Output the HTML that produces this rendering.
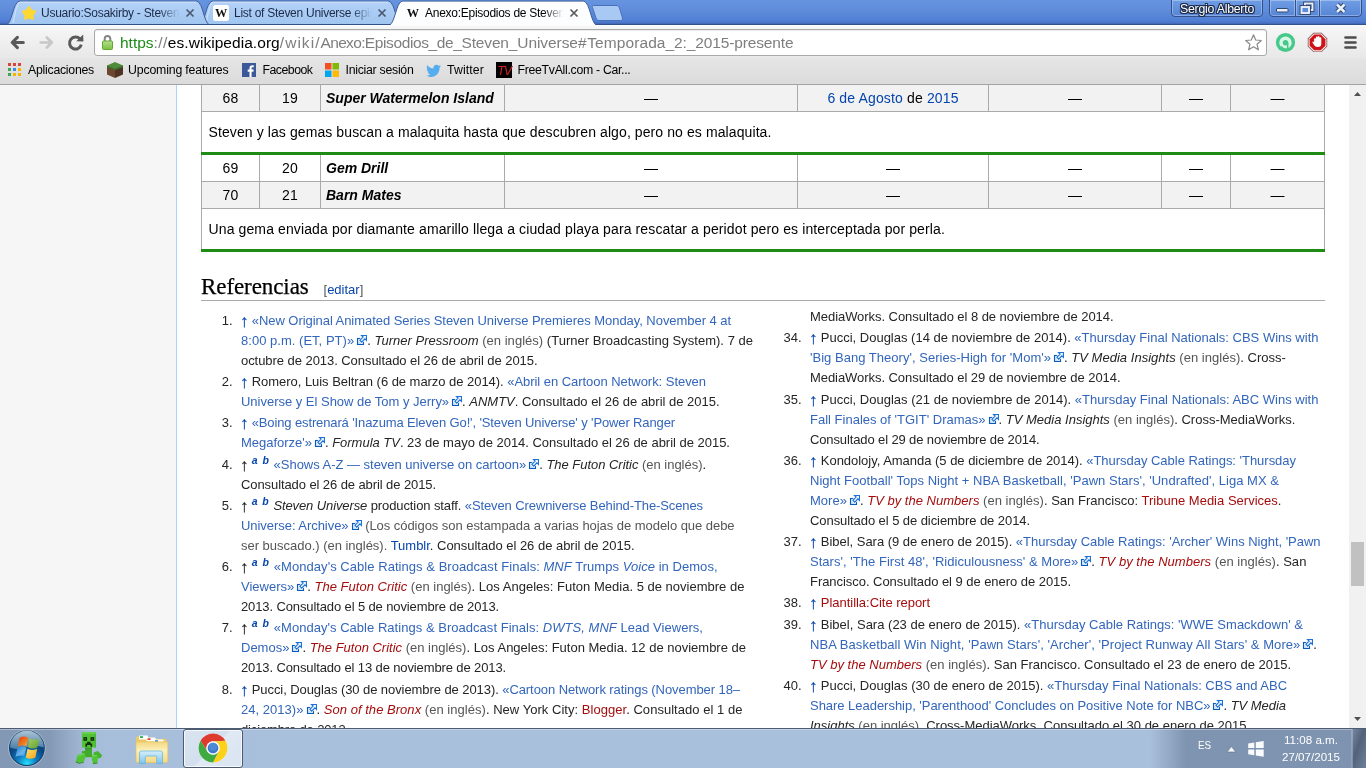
<!DOCTYPE html>
<html lang="es">
<head>
<meta charset="utf-8">
<title>Anexo:Episodios de Steven Universe</title>
<style>
html,body{margin:0;padding:0;}
body{width:1366px;height:768px;overflow:hidden;position:relative;background:#fff;font-family:"Liberation Sans",sans-serif;}
.abs{position:absolute;}
#root{position:absolute;left:0;top:0;width:1366px;height:768px;overflow:hidden;will-change:transform;}
/* ---------- browser chrome ---------- */
#titlebar{position:absolute;left:0;top:0;width:1366px;height:25px;background:linear-gradient(#6694df 0,#5f8ddb 10px,#507ed4 21px,#4873c6 23px,#3d62ad 24px);}
#titleline0{position:absolute;left:0;top:24px;width:1366px;height:1px;background:#33528c;}
#toolbar{position:absolute;left:0;top:25px;width:1366px;height:33px;background:linear-gradient(#fbfdff 0,#f6f6f6 2px,#e8e8e8 33px);}
#bookbar{position:absolute;left:0;top:58px;width:1366px;height:26px;background:linear-gradient(#e5e5e5,#dbdbdb);}
#chromeline{position:absolute;left:0;top:84px;width:1366px;height:1px;background:#a3a3a3;}
.tabtxt{position:absolute;top:4px;height:18px;line-height:18px;font-size:12px;letter-spacing:-.27px;color:#1b2a47;white-space:nowrap;overflow:hidden;}
.tabtxt.act{color:#000;}
.bm{position:absolute;top:61px;height:18px;line-height:18px;font-size:12.3px;color:#000;white-space:nowrap;}
#omni{position:absolute;left:94px;top:29px;width:1171px;height:25px;background:#fff;border:1px solid #a9a9a9;border-radius:3px;box-shadow:inset 0 1px 1px rgba(0,0,0,.08);}
#url{position:absolute;left:120px;top:31px;height:23px;line-height:23px;font-size:15.5px;white-space:nowrap;color:#7e7e7e;}
#url .g{color:#1c8c17;}
#url .k{color:#000;}
/* ---------- page ---------- */
#page{position:absolute;left:0;top:85px;width:1349px;height:643px;background:#f6f6f6;overflow:hidden;}
#content{position:absolute;left:176px;top:-200px;width:1173px;height:1200px;background:#fff;border-left:1px solid #a7d7f9;}
#scroll{position:absolute;left:1349px;top:85px;width:17px;height:643px;background:#f1f1f1;}
#thumb{position:absolute;left:2px;top:457px;width:13px;height:44px;background:#c1c1c1;}

.tbl{position:absolute;left:201px;top:0;width:1124px;height:170px;font-size:14px;color:#000;}
.tbl .row{position:absolute;left:0;width:1124px;}
.tbl .row.g{background:#f2f2f2;}
.tbl .hl{position:absolute;left:0;width:1124px;height:1px;background:#aaa;}
.tbl .gl{position:absolute;left:0;width:1124px;height:3px;background:#1e8c14;}
.tbl .vl{position:absolute;width:1px;background:#aaa;}
.tbl .vl.c{top:0;height:26px;}
.tbl .vl.d{top:70px;height:53px;}
.tbl .td{position:absolute;height:26px;line-height:26px;text-align:center;white-space:nowrap;letter-spacing:.12px;}
.tbl .td.t{text-align:left;letter-spacing:0;}
.tbl .sum{position:absolute;left:7.500px;height:40px;line-height:40px;white-space:nowrap;letter-spacing:.1px;}
a.l{color:#0645ad;}
a.e{color:#3366bb;}
a.n{color:#a50d0d;}
#h2{position:absolute;left:201px;top:187px;height:30px;line-height:30px;font-family:"Liberation Serif",serif;font-size:23px;letter-spacing:-.08px;color:#000;white-space:nowrap;-webkit-text-stroke:.25px #000;}
#edit{position:absolute;left:323.500px;top:195px;height:20px;line-height:20px;font-size:13px;color:#555;white-space:nowrap;}
#h2line{position:absolute;left:201px;top:215px;width:1124px;height:1px;background:#aaa;}
.ln,.num{position:absolute;height:20px;line-height:20px;font-size:13px;color:#252525;white-space:nowrap;}
.num{width:31.500px;text-align:right;}
.ln .g{color:#555;}
.ln sup{font-size:10.5px;line-height:0;vertical-align:baseline;position:relative;top:-5px;margin-right:1.2px;letter-spacing:0;}
.ln .u{display:inline-block;width:7.200px;font-size:17px;line-height:0;text-align:center;position:relative;top:1.500px;left:-1px;letter-spacing:0;-webkit-text-stroke:.25px currentColor;}
svg.x{display:inline-block;vertical-align:baseline;position:relative;top:0;}
/* ---------- taskbar ---------- */
#taskbar{position:absolute;left:0;top:728px;width:1366px;height:40px;background:linear-gradient(90deg,#8398b5 0,#8499b6 50px,#a7bedb 90px,#a9c0dc 300px,#a9c0dc 1150px,#7f94b0 1186px,#7e93af 1366px);}
#taskline{position:absolute;left:0;top:728px;width:1366px;height:1px;background:#4d5c72;}
#taskhi{position:absolute;left:0;top:729px;width:1366px;height:1px;background:rgba(255,255,255,.35);}
.tray{position:absolute;height:16px;line-height:16px;font-size:11.6px;color:#fff;white-space:nowrap;}
</style>
</head>
<body>
<div id="root">
<!-- PAGE -->
<div id="page">
 <div id="content"></div>
 <!-- table -->
 <div class="tbl">
  <div class="row g" style="top:0;height:26px"></div>
  <div class="hl" style="top:26px"></div>
  <div class="hl" style="top:96px"></div>
  <div class="row g" style="top:97px;height:26px"></div>
  <div class="hl" style="top:123px"></div>
  <div class="vl" style="left:0;top:0;height:164px"></div>
  <div class="vl" style="left:1123px;top:0;height:164px"></div>
  <div class="vl c" style="left:58px"></div><div class="vl c" style="left:119px"></div><div class="vl c" style="left:303px"></div><div class="vl c" style="left:596px"></div><div class="vl c" style="left:787px"></div><div class="vl c" style="left:960px"></div><div class="vl c" style="left:1029px"></div>
  <div class="vl d" style="left:58px"></div><div class="vl d" style="left:119px"></div><div class="vl d" style="left:303px"></div><div class="vl d" style="left:596px"></div><div class="vl d" style="left:787px"></div><div class="vl d" style="left:960px"></div><div class="vl d" style="left:1029px"></div>
  <div class="gl" style="top:67px"></div>
  <div class="gl" style="top:164px"></div>
  <!-- row 68 -->
  <div class="td" style="left:1px;width:57px;top:0">68</div>
  <div class="td" style="left:59px;width:60px;top:0">19</div>
  <div class="td t" style="left:125px;top:0"><b><i>Super Watermelon Island</i></b></div>
  <div class="td" style="left:304px;width:292px;top:0">—</div>
  <div class="td" style="left:597px;width:190px;top:0;letter-spacing:.145px"><a class="l">6 de Agosto</a> de <a class="l">2015</a></div>
  <div class="td" style="left:788px;width:172px;top:0">—</div>
  <div class="td" style="left:961px;width:68px;top:0">—</div>
  <div class="td" style="left:1030px;width:93px;top:0">—</div>
  <div class="sum" style="top:27px;letter-spacing:.095px">Steven y las gemas buscan a malaquita hasta que descubren algo, pero no es malaquita.</div>
  <!-- row 69 -->
  <div class="td" style="left:1px;width:57px;top:70px">69</div>
  <div class="td" style="left:59px;width:60px;top:70px">20</div>
  <div class="td t" style="left:125px;top:70px"><b><i>Gem Drill</i></b></div>
  <div class="td" style="left:304px;width:292px;top:70px">—</div>
  <div class="td" style="left:597px;width:190px;top:70px">—</div>
  <div class="td" style="left:788px;width:172px;top:70px">—</div>
  <div class="td" style="left:961px;width:68px;top:70px">—</div>
  <div class="td" style="left:1030px;width:93px;top:70px">—</div>
  <!-- row 70 -->
  <div class="td" style="left:1px;width:57px;top:97px">70</div>
  <div class="td" style="left:59px;width:60px;top:97px">21</div>
  <div class="td t" style="left:125px;top:97px"><b><i>Barn Mates</i></b></div>
  <div class="td" style="left:304px;width:292px;top:97px">—</div>
  <div class="td" style="left:597px;width:190px;top:97px">—</div>
  <div class="td" style="left:788px;width:172px;top:97px">—</div>
  <div class="td" style="left:961px;width:68px;top:97px">—</div>
  <div class="td" style="left:1030px;width:93px;top:97px">—</div>
  <div class="sum" style="top:124px;letter-spacing:.117px">Una gema enviada por diamante amarillo llega a ciudad playa para rescatar a peridot pero es interceptada por perla.</div>
 </div>
 <!-- heading -->
 <div id="h2">Referencias</div>
 <div id="edit">[<a class="l">editar</a>]</div>
 <div id="h2line"></div>
 <!-- references -->
<div class="num" style="left:201px;top:226.0px">1.</div>
<div class="ln" id="l0" style="left:241px;top:226.0px;letter-spacing:-0.051px"><a class="l u">↑</a> <a class="e">«New Original Animated Series Steven Universe Premieres Monday, November 4 at</a></div>
<div class="ln" id="l1" style="left:241px;top:246.0px;letter-spacing:0.023px"><a class="e">8:00 p.m. (ET, PT)»</a><svg class="x" width="13" height="10" viewBox="-3 0 13 10"><rect x=".5" y="3.500" width="6" height="6" fill="#d3e6fa" stroke="#085bb8" stroke-width="1.100"/><path d="M4.500 .500 H9.500 V5.500 L7.900 3.900 L4.700 7.100 L2.900 5.300 L6.100 2.100 Z" fill="#fff" stroke="#fff" stroke-width="2.200"/><path d="M4.500 .500 H9.500 V5.500 L7.900 3.900 L4.700 7.100 L2.900 5.300 L6.100 2.100 Z" fill="#f2f8ff" stroke="#1c72d8" stroke-width="1.150"/></svg>. <i>Turner Pressroom</i> <span class="g">(en inglés)</span> (Turner Broadcasting System). 7 de</div>
<div class="ln" id="l2" style="left:241px;top:266.0px;letter-spacing:-0.054px">octubre de 2013. Consultado el 26 de abril de 2015.</div>
<div class="num" style="left:201px;top:287.0px">2.</div>
<div class="ln" id="l3" style="left:241px;top:287.0px;letter-spacing:-0.042px"><a class="l u">↑</a> Romero, Luis Beltran (6 de marzo de 2014). <a class="e">«Abril en Cartoon Network: Steven</a></div>
<div class="ln" id="l4" style="left:241px;top:307.0px;letter-spacing:-0.014px"><a class="e">Universe y El Show de Tom y Jerry»</a><svg class="x" width="13" height="10" viewBox="-3 0 13 10"><rect x=".5" y="3.500" width="6" height="6" fill="#d3e6fa" stroke="#085bb8" stroke-width="1.100"/><path d="M4.500 .500 H9.500 V5.500 L7.900 3.900 L4.700 7.100 L2.900 5.300 L6.100 2.100 Z" fill="#fff" stroke="#fff" stroke-width="2.200"/><path d="M4.500 .500 H9.500 V5.500 L7.900 3.900 L4.700 7.100 L2.900 5.300 L6.100 2.100 Z" fill="#f2f8ff" stroke="#1c72d8" stroke-width="1.150"/></svg>. <i>ANMTV</i>. Consultado el 26 de abril de 2015.</div>
<div class="num" style="left:201px;top:328.0px">3.</div>
<div class="ln" id="l5" style="left:241px;top:328.0px;letter-spacing:-0.124px"><a class="l u">↑</a> <a class="e">«Boing estrenará 'Inazuma Eleven Go!', 'Steven Universe' y 'Power Ranger</a></div>
<div class="ln" id="l6" style="left:241px;top:348.0px;letter-spacing:-0.017px"><a class="e">Megaforze'»</a><svg class="x" width="13" height="10" viewBox="-3 0 13 10"><rect x=".5" y="3.500" width="6" height="6" fill="#d3e6fa" stroke="#085bb8" stroke-width="1.100"/><path d="M4.500 .500 H9.500 V5.500 L7.900 3.900 L4.700 7.100 L2.900 5.300 L6.100 2.100 Z" fill="#fff" stroke="#fff" stroke-width="2.200"/><path d="M4.500 .500 H9.500 V5.500 L7.900 3.900 L4.700 7.100 L2.900 5.300 L6.100 2.100 Z" fill="#f2f8ff" stroke="#1c72d8" stroke-width="1.150"/></svg>. <i>Formula TV</i>. 23 de mayo de 2014. Consultado el 26 de abril de 2015.</div>
<div class="num" style="left:201px;top:370.0px">4.</div>
<div class="ln" id="l7" style="left:241px;top:370.0px;letter-spacing:-0.026px"><span class="u">↑</span> <sup><i><b><a class="l">a</a></b></i></sup> <sup><i><b><a class="l">b</a></b></i></sup> <a class="e">«Shows A-Z — steven universe on cartoon»</a><svg class="x" width="13" height="10" viewBox="-3 0 13 10"><rect x=".5" y="3.500" width="6" height="6" fill="#d3e6fa" stroke="#085bb8" stroke-width="1.100"/><path d="M4.500 .500 H9.500 V5.500 L7.900 3.900 L4.700 7.100 L2.900 5.300 L6.100 2.100 Z" fill="#fff" stroke="#fff" stroke-width="2.200"/><path d="M4.500 .500 H9.500 V5.500 L7.900 3.900 L4.700 7.100 L2.900 5.300 L6.100 2.100 Z" fill="#f2f8ff" stroke="#1c72d8" stroke-width="1.150"/></svg>. <i>The Futon Critic</i> <span class="g">(en inglés)</span>.</div>
<div class="ln" id="l8" style="left:241px;top:390.0px;letter-spacing:-0.089px">Consultado el 26 de abril de 2015.</div>
<div class="num" style="left:201px;top:411.0px">5.</div>
<div class="ln" id="l9" style="left:241px;top:411.0px;letter-spacing:-0.103px"><span class="u">↑</span> <sup><i><b><a class="l">a</a></b></i></sup> <sup><i><b><a class="l">b</a></b></i></sup> <i>Steven Universe</i> production staff. <a class="e">«Steven Crewniverse Behind-The-Scenes</a></div>
<div class="ln" id="l10" style="left:241px;top:431.0px;letter-spacing:-0.047px"><a class="e">Universe: Archive»</a><svg class="x" width="13" height="10" viewBox="-3 0 13 10"><rect x=".5" y="3.500" width="6" height="6" fill="#d3e6fa" stroke="#085bb8" stroke-width="1.100"/><path d="M4.500 .500 H9.500 V5.500 L7.900 3.900 L4.700 7.100 L2.900 5.300 L6.100 2.100 Z" fill="#fff" stroke="#fff" stroke-width="2.200"/><path d="M4.500 .500 H9.500 V5.500 L7.900 3.900 L4.700 7.100 L2.900 5.300 L6.100 2.100 Z" fill="#f2f8ff" stroke="#1c72d8" stroke-width="1.150"/></svg> <span class="g">(Los códigos son estampada a varias hojas de modelo que debe</span></div>
<div class="ln" id="l11" style="left:241px;top:451.0px;letter-spacing:-0.016px"><span class="g">ser buscado.) (en inglés).</span> <a class="l">Tumblr</a>. Consultado el 26 de abril de 2015.</div>
<div class="num" style="left:201px;top:472.0px">6.</div>
<div class="ln" id="l12" style="left:241px;top:472.0px;letter-spacing:0.045px"><span class="u">↑</span> <sup><i><b><a class="l">a</a></b></i></sup> <sup><i><b><a class="l">b</a></b></i></sup> <a class="e">«Monday's Cable Ratings &amp; Broadcast Finals: <i>MNF</i> Trumps <i>Voice</i> in Demos,</a></div>
<div class="ln" id="l13" style="left:241px;top:492.0px;letter-spacing:0.009px"><a class="e">Viewers»</a><svg class="x" width="13" height="10" viewBox="-3 0 13 10"><rect x=".5" y="3.500" width="6" height="6" fill="#d3e6fa" stroke="#085bb8" stroke-width="1.100"/><path d="M4.500 .500 H9.500 V5.500 L7.900 3.900 L4.700 7.100 L2.900 5.300 L6.100 2.100 Z" fill="#fff" stroke="#fff" stroke-width="2.200"/><path d="M4.500 .500 H9.500 V5.500 L7.900 3.900 L4.700 7.100 L2.900 5.300 L6.100 2.100 Z" fill="#f2f8ff" stroke="#1c72d8" stroke-width="1.150"/></svg>. <a class="n"><i>The Futon Critic</i></a> <span class="g">(en inglés)</span>. Los Angeles: Futon Media. 5 de noviembre de</div>
<div class="ln" id="l14" style="left:241px;top:512.0px;letter-spacing:-0.118px">2013. Consultado el 5 de noviembre de 2013.</div>
<div class="num" style="left:201px;top:533.0px">7.</div>
<div class="ln" id="l15" style="left:241px;top:533.0px;letter-spacing:0.031px"><span class="u">↑</span> <sup><i><b><a class="l">a</a></b></i></sup> <sup><i><b><a class="l">b</a></b></i></sup> <a class="e">«Monday's Cable Ratings &amp; Broadcast Finals: <i>DWTS, MNF</i> Lead Viewers,</a></div>
<div class="ln" id="l16" style="left:241px;top:553.0px;letter-spacing:-0.002px"><a class="e">Demos»</a><svg class="x" width="13" height="10" viewBox="-3 0 13 10"><rect x=".5" y="3.500" width="6" height="6" fill="#d3e6fa" stroke="#085bb8" stroke-width="1.100"/><path d="M4.500 .500 H9.500 V5.500 L7.900 3.900 L4.700 7.100 L2.900 5.300 L6.100 2.100 Z" fill="#fff" stroke="#fff" stroke-width="2.200"/><path d="M4.500 .500 H9.500 V5.500 L7.900 3.900 L4.700 7.100 L2.900 5.300 L6.100 2.100 Z" fill="#f2f8ff" stroke="#1c72d8" stroke-width="1.150"/></svg>. <a class="n"><i>The Futon Critic</i></a> <span class="g">(en inglés)</span>. Los Angeles: Futon Media. 12 de noviembre de</div>
<div class="ln" id="l17" style="left:241px;top:573.0px;letter-spacing:-0.121px">2013. Consultado el 13 de noviembre de 2013.</div>
<div class="num" style="left:201px;top:595.0px">8.</div>
<div class="ln" id="l18" style="left:241px;top:595.0px;letter-spacing:-0.075px"><a class="l u">↑</a> Pucci, Douglas (30 de noviembre de 2013). <a class="e">«Cartoon Network ratings (November 18–</a></div>
<div class="ln" id="l19" style="left:241px;top:615.0px;letter-spacing:0.033px"><a class="e">24, 2013)»</a><svg class="x" width="13" height="10" viewBox="-3 0 13 10"><rect x=".5" y="3.500" width="6" height="6" fill="#d3e6fa" stroke="#085bb8" stroke-width="1.100"/><path d="M4.500 .500 H9.500 V5.500 L7.900 3.900 L4.700 7.100 L2.900 5.300 L6.100 2.100 Z" fill="#fff" stroke="#fff" stroke-width="2.200"/><path d="M4.500 .500 H9.500 V5.500 L7.900 3.900 L4.700 7.100 L2.900 5.300 L6.100 2.100 Z" fill="#f2f8ff" stroke="#1c72d8" stroke-width="1.150"/></svg>. <a class="n"><i>Son of the Bronx</i></a> <span class="g">(en inglés)</span>. New York City: <a class="n">Blogger</a>. Consultado el 1 de</div>
<div class="ln" id="l20" style="left:241px;top:635.0px;letter-spacing:-0.143px">diciembre de 2013.</div>
<div class="ln" id="l21" style="left:810px;top:222.0px;letter-spacing:-0.054px">MediaWorks. Consultado el 8 de noviembre de 2014.</div>
<div class="num" style="left:770px;top:243.0px">34.</div>
<div class="ln" id="l22" style="left:810px;top:243.0px;letter-spacing:-0.002px"><a class="l u">↑</a> Pucci, Douglas (14 de noviembre de 2014). <a class="e">«Thursday Final Nationals: CBS Wins with</a></div>
<div class="ln" id="l23" style="left:810px;top:263.0px;letter-spacing:0.021px"><a class="e">'Big Bang Theory', Series-High for 'Mom'»</a><svg class="x" width="13" height="10" viewBox="-3 0 13 10"><rect x=".5" y="3.500" width="6" height="6" fill="#d3e6fa" stroke="#085bb8" stroke-width="1.100"/><path d="M4.500 .500 H9.500 V5.500 L7.900 3.900 L4.700 7.100 L2.900 5.300 L6.100 2.100 Z" fill="#fff" stroke="#fff" stroke-width="2.200"/><path d="M4.500 .500 H9.500 V5.500 L7.900 3.900 L4.700 7.100 L2.900 5.300 L6.100 2.100 Z" fill="#f2f8ff" stroke="#1c72d8" stroke-width="1.150"/></svg>. <i>TV Media Insights</i> <span class="g">(en inglés)</span>. Cross-</div>
<div class="ln" id="l24" style="left:810px;top:283.0px;letter-spacing:-0.058px">MediaWorks. Consultado el 29 de noviembre de 2014.</div>
<div class="num" style="left:770px;top:305.0px">35.</div>
<div class="ln" id="l25" style="left:810px;top:305.0px;letter-spacing:0.006px"><a class="l u">↑</a> Pucci, Douglas (21 de noviembre de 2014). <a class="e">«Thursday Final Nationals: ABC Wins with</a></div>
<div class="ln" id="l26" style="left:810px;top:325.0px;letter-spacing:0.003px"><a class="e">Fall Finales of 'TGIT' Dramas»</a><svg class="x" width="13" height="10" viewBox="-3 0 13 10"><rect x=".5" y="3.500" width="6" height="6" fill="#d3e6fa" stroke="#085bb8" stroke-width="1.100"/><path d="M4.500 .500 H9.500 V5.500 L7.900 3.900 L4.700 7.100 L2.900 5.300 L6.100 2.100 Z" fill="#fff" stroke="#fff" stroke-width="2.200"/><path d="M4.500 .500 H9.500 V5.500 L7.900 3.900 L4.700 7.100 L2.900 5.300 L6.100 2.100 Z" fill="#f2f8ff" stroke="#1c72d8" stroke-width="1.150"/></svg>. <i>TV Media Insights</i> <span class="g">(en inglés)</span>. Cross-MediaWorks.</div>
<div class="ln" id="l27" style="left:810px;top:345.0px;letter-spacing:-0.123px">Consultado el 29 de noviembre de 2014.</div>
<div class="num" style="left:770px;top:366.0px">36.</div>
<div class="ln" id="l28" style="left:810px;top:366.0px;letter-spacing:-0.023px"><a class="l u">↑</a> Kondolojy, Amanda (5 de diciembre de 2014). <a class="e">«Thursday Cable Ratings: 'Thursday</a></div>
<div class="ln" id="l29" style="left:810px;top:386.0px;letter-spacing:0.024px"><a class="e">Night Football' Tops Night + NBA Basketball, 'Pawn Stars', 'Undrafted', Liga MX &amp;</a></div>
<div class="ln" id="l30" style="left:810px;top:406.0px;letter-spacing:0.014px"><a class="e">More»</a><svg class="x" width="13" height="10" viewBox="-3 0 13 10"><rect x=".5" y="3.500" width="6" height="6" fill="#d3e6fa" stroke="#085bb8" stroke-width="1.100"/><path d="M4.500 .500 H9.500 V5.500 L7.900 3.900 L4.700 7.100 L2.900 5.300 L6.100 2.100 Z" fill="#fff" stroke="#fff" stroke-width="2.200"/><path d="M4.500 .500 H9.500 V5.500 L7.900 3.900 L4.700 7.100 L2.900 5.300 L6.100 2.100 Z" fill="#f2f8ff" stroke="#1c72d8" stroke-width="1.150"/></svg>. <a class="n"><i>TV by the Numbers</i></a> <span class="g">(en inglés)</span>. San Francisco: <a class="n">Tribune Media Services</a>.</div>
<div class="ln" id="l31" style="left:810px;top:426.0px;letter-spacing:-0.070px">Consultado el 5 de diciembre de 2014.</div>
<div class="num" style="left:770px;top:447.0px">37.</div>
<div class="ln" id="l32" style="left:810px;top:447.0px;letter-spacing:-0.023px"><a class="l u">↑</a> Bibel, Sara (9 de enero de 2015). <a class="e">«Thursday Cable Ratings: 'Archer' Wins Night, 'Pawn</a></div>
<div class="ln" id="l33" style="left:810px;top:467.0px;letter-spacing:0.033px"><a class="e">Stars', 'The First 48', 'Ridiculousness' &amp; More»</a><svg class="x" width="13" height="10" viewBox="-3 0 13 10"><rect x=".5" y="3.500" width="6" height="6" fill="#d3e6fa" stroke="#085bb8" stroke-width="1.100"/><path d="M4.500 .500 H9.500 V5.500 L7.900 3.900 L4.700 7.100 L2.900 5.300 L6.100 2.100 Z" fill="#fff" stroke="#fff" stroke-width="2.200"/><path d="M4.500 .500 H9.500 V5.500 L7.900 3.900 L4.700 7.100 L2.900 5.300 L6.100 2.100 Z" fill="#f2f8ff" stroke="#1c72d8" stroke-width="1.150"/></svg>. <a class="n"><i>TV by the Numbers</i></a> <span class="g">(en inglés)</span>. San</div>
<div class="ln" id="l34" style="left:810px;top:487.0px;letter-spacing:-0.047px">Francisco. Consultado el 9 de enero de 2015.</div>
<div class="num" style="left:770px;top:508.0px">38.</div>
<div class="ln" id="l35" style="left:810px;top:508.0px;letter-spacing:-0.029px"><a class="l u">↑</a> <a class="n">Plantilla:Cite report</a></div>
<div class="num" style="left:770px;top:530.0px">39.</div>
<div class="ln" id="l36" style="left:810px;top:530.0px;letter-spacing:0.004px"><a class="l u">↑</a> Bibel, Sara (23 de enero de 2015). <a class="e">«Thursday Cable Ratings: 'WWE Smackdown' &amp;</a></div>
<div class="ln" id="l37" style="left:810px;top:550.0px;letter-spacing:0.052px"><a class="e">NBA Basketball Win Night, 'Pawn Stars', 'Archer', 'Project Runway All Stars' &amp; More»</a><svg class="x" width="13" height="10" viewBox="-3 0 13 10"><rect x=".5" y="3.500" width="6" height="6" fill="#d3e6fa" stroke="#085bb8" stroke-width="1.100"/><path d="M4.500 .500 H9.500 V5.500 L7.900 3.900 L4.700 7.100 L2.900 5.300 L6.100 2.100 Z" fill="#fff" stroke="#fff" stroke-width="2.200"/><path d="M4.500 .500 H9.500 V5.500 L7.900 3.900 L4.700 7.100 L2.900 5.300 L6.100 2.100 Z" fill="#f2f8ff" stroke="#1c72d8" stroke-width="1.150"/></svg>.</div>
<div class="ln" id="l38" style="left:810px;top:570.0px;letter-spacing:0.006px"><a class="n"><i>TV by the Numbers</i></a> <span class="g">(en inglés)</span>. San Francisco. Consultado el 23 de enero de 2015.</div>
<div class="num" style="left:770px;top:591.0px">40.</div>
<div class="ln" id="l39" style="left:810px;top:591.0px;letter-spacing:0.002px"><a class="l u">↑</a> Pucci, Douglas (30 de enero de 2015). <a class="e">«Thursday Final Nationals: CBS and ABC</a></div>
<div class="ln" id="l40" style="left:810px;top:611.0px;letter-spacing:-0.030px"><a class="e">Share Leadership, 'Parenthood' Concludes on Positive Note for NBC»</a><svg class="x" width="13" height="10" viewBox="-3 0 13 10"><rect x=".5" y="3.500" width="6" height="6" fill="#d3e6fa" stroke="#085bb8" stroke-width="1.100"/><path d="M4.500 .500 H9.500 V5.500 L7.900 3.900 L4.700 7.100 L2.900 5.300 L6.100 2.100 Z" fill="#fff" stroke="#fff" stroke-width="2.200"/><path d="M4.500 .500 H9.500 V5.500 L7.900 3.900 L4.700 7.100 L2.900 5.300 L6.100 2.100 Z" fill="#f2f8ff" stroke="#1c72d8" stroke-width="1.150"/></svg>. <i>TV Media</i></div>
<div class="ln" id="l41" style="left:810px;top:631.0px;letter-spacing:-0.007px"><i>Insights</i> <span class="g">(en inglés)</span>. Cross-MediaWorks. Consultado el 30 de enero de 2015.</div>
</div>
<div id="scroll"><div id="thumb"></div><svg class="abs" style="left:0;top:0" width="17" height="643" viewBox="0 0 17 643"><path d="M5 11 L8.500 7 L12 11 Z M5 632 L8.500 636 L12 632 Z" fill="#505050"/></svg></div>

<!-- CHROME -->
<div id="titlebar"></div>
<div id="titleline0"></div>
<svg class="abs" style="left:0;top:0" width="700" height="25" viewBox="0 0 700 25">
 <defs>
  <linearGradient id="gi" x1="0" y1="0" x2="0" y2="1"><stop offset="0" stop-color="#b5d2f9"/><stop offset="1" stop-color="#9fc5ef"/></linearGradient>
  <linearGradient id="ga" x1="0" y1="0" x2="0" y2="1"><stop offset="0" stop-color="#ffffff"/><stop offset="1" stop-color="#fbfdff"/></linearGradient>
 </defs>
 <!-- tab 2 (behind) -->
 <path d="M199.5 25 C205.0 23 206.0 3 212.0 1.1 L389.0 1.1 C395.0 3 396.0 23 401.5 25 Z" fill="url(#gi)"/>
 <path d="M199.5 25 C205.0 23 206.0 3 212.0 1.1 L389.0 1.1 C395.0 3 396.0 23 401.5 25" fill="none" stroke="#3d5e9b" stroke-width="1"/>
 <path d="M206.0 23 C207.5 18 209.0 4 213.0 2.1 L388.0 2.1" fill="none" stroke="#d9e8fc" stroke-width="1" opacity=".85"/>
 <!-- tab 1 -->
 <path d="M6.5 25 C12.0 23 13.0 3 19.0 1.1 L197.0 1.1 C203.0 3 204.0 23 209.5 25 Z" fill="url(#gi)"/>
 <path d="M6.5 25 C12.0 23 13.0 3 19.0 1.1 L197.0 1.1 C203.0 3 204.0 23 209.5 25" fill="none" stroke="#3d5e9b" stroke-width="1"/>
 <path d="M13.0 23 C14.5 18 16.0 4 20.0 2.1 L196.0 2.1" fill="none" stroke="#d9e8fc" stroke-width="1" opacity=".85"/>
 <!-- new tab button -->
 <path d="M593.500 5.500 L616 5.500 C618 5.500 619 6.500 619.500 8 L622.500 18 C623 19.500 622 20.500 620.500 20.500 L599 20.500 C597.500 20.500 596.500 19.500 596 18 L592.500 7.500 C592 6.200 592.500 5.500 593.500 5.500 Z" fill="#a9c9f5" stroke="#4a70b8" stroke-width="1"/>
 <!-- title bottom line -->
 <rect x="0" y="24" width="700" height="1" fill="#33528c"/>
 <!-- active tab -->
 <path d="M389.5 25.5 C395.0 23 396.0 3 402.0 1.1 L584.0 1.1 C590.0 3 591.0 23 596.5 25.5 Z" fill="url(#ga)"/>
 <path d="M389.5 25 C395.0 23 396.0 3 402.0 1.1 L584.0 1.1 C590.0 3 591.0 23 596.5 25" fill="none" stroke="#3d5e9b" stroke-width="1"/>
 <!-- close x -->
 <g stroke="#4a5870" stroke-width="1.700" stroke-linecap="butt">
  <path d="M186.500 9.500 l7 7 m0 -7 l-7 7"/>
  <path d="M378.500 9.500 l7 7 m0 -7 l-7 7"/>
 </g>
 <path d="M570.500 9.500 l7 7 m0 -7 l-7 7" stroke="#5a5a5a" stroke-width="1.700"/>
 <!-- favicon star -->
 <path d="M29.00 7.00 L31.17 10.61 L35.28 11.56 L32.52 14.74 L32.88 18.94 L29.00 17.30 L25.12 18.94 L25.48 14.74 L22.72 11.56 L26.83 10.61 Z" fill="#fdd835" stroke="#fdd835" stroke-width="2" stroke-linejoin="round"/>
 <!-- favicon W tab2 -->
 <rect x="213" y="5" width="16" height="16" rx="2.500" fill="#fff"/>
 <text x="221.200" y="17.300" text-anchor="middle" font-family="Liberation Serif,serif" font-weight="bold" font-size="12.3" fill="#111">W</text>
 <!-- favicon W tab3 -->
 <text x="413" y="17.300" text-anchor="middle" font-family="Liberation Serif,serif" font-weight="bold" font-size="12.3" fill="#111">W</text>
</svg>
<div class="tabtxt" style="left:41px;width:139px;-webkit-mask-image:linear-gradient(90deg,#000 118px,transparent 139px);">Usuario:Sosakirby - Steven Universe</div>
<div class="tabtxt" style="left:234px;width:138px;-webkit-mask-image:linear-gradient(90deg,#000 117px,transparent 138px);">List of Steven Universe episodes</div>
<div class="tabtxt act" style="left:425px;width:139px;-webkit-mask-image:linear-gradient(90deg,#000 118px,transparent 139px);">Anexo:Episodios de Steven Universe</div>

<div id="toolbar"></div>
<div id="bookbar"></div>
<div id="chromeline"></div>
<div id="omni"></div>
<div id="url"><span class="g">https</span><span style="letter-spacing:.43px">://</span><span class="k" style="letter-spacing:.05px">es.wikipedia.org</span><span style="letter-spacing:1.049px">/wiki/</span><span style="letter-spacing:-0.669px">Anexo:</span><span style="letter-spacing:-0.381px">Episodios_de_</span><span style="letter-spacing:-0.163px">Steven_</span><span style="letter-spacing:-0.065px">Universe</span><span style="letter-spacing:0.725px">#</span><span style="letter-spacing:0.078px">Temporada</span><span style="letter-spacing:-0.126px">_2:_2015-presente</span></div>
<!-- toolbar icons -->
<svg class="abs" style="left:0;top:25px" width="130" height="33" viewBox="0 25 130 33">
 <defs><linearGradient id="lk" x1="0" y1="0" x2="0" y2="1"><stop offset="0" stop-color="#b5e08c"/><stop offset="1" stop-color="#79c03f"/></linearGradient></defs>
 <g fill="none" stroke="#595959" stroke-width="3.100" stroke-linecap="round" stroke-linejoin="round">
  <path d="M23.300 42.500 H12.300 M17.400 37.300 L12.200 42.500 L17.400 47.700"/>
 </g>
 <g fill="none" stroke="#c8c8c8" stroke-width="2.700" stroke-linecap="round" stroke-linejoin="round">
  <path d="M40.700 42.500 H51.700 M46.800 37.500 L51.800 42.500 L46.800 47.500"/>
 </g>
 <path d="M80 39 A6 6 0 1 0 81.300 44.700" fill="none" stroke="#595959" stroke-width="3"/>
 <path d="M76.300 41.200 L83.400 41.400 L83.200 34.400 Z" fill="#595959"/>
 <!-- lock -->
 <path d="M104.700 41.500 V38.700 A2.800 2.800 0 0 1 110.300 38.700 V41.500" fill="none" stroke="#858585" stroke-width="2"/>
 <rect x="102.500" y="41" width="10" height="8.500" rx="1" fill="url(#lk)" stroke="#62a835" stroke-width="1"/>
</svg>
<svg class="abs" style="left:1240px;top:25px" width="126" height="33" viewBox="1240 25 126 33">
 <path d="M1253.500 34.800 L1255.700 40 L1261.300 40.500 L1257 44.200 L1258.400 49.800 L1253.500 46.800 L1248.600 49.800 L1250 44.200 L1245.700 40.500 L1251.300 40 Z" fill="#fff" stroke="#8a8a8a" stroke-width="1.200" stroke-linejoin="round"/>
 <circle cx="1285.500" cy="42.500" r="9.600" fill="#45c98b"/>
 <circle cx="1285.500" cy="42.700" r="4.500" fill="none" stroke="#d9f7e9" stroke-width="3.500"/>
 <path d="M1287.700 42.700 V49.500" stroke="#45c98b" stroke-width="1.500"/>
 <path d="M1281 46.500 Q1283.500 49.500 1287 49.300" fill="none" stroke="#45c98b" stroke-width="1.400"/>
 <path d="M1313.48 32.70 L1321.52 32.70 L1327.20 38.38 L1327.20 46.42 L1321.52 52.10 L1313.48 52.10 L1307.80 46.42 L1307.80 38.38 Z" fill="#7d3b3b"/>
 <path d="M1313.77 33.40 L1321.23 33.40 L1326.50 38.67 L1326.50 46.13 L1321.23 51.40 L1313.77 51.40 L1308.50 46.13 L1308.50 38.67 Z" fill="#fbefef"/>
 <path d="M1314.23 34.50 L1320.77 34.50 L1325.40 39.13 L1325.40 45.67 L1320.77 50.30 L1314.23 50.30 L1309.60 45.67 L1309.60 39.13 Z" fill="#cf1217"/>
 <path d="M1314.100 43.800 v-4.600 a.9 .9 0 0 1 1.800 0 v-1.700 a.9 .9 0 0 1 1.800 0 v-.6 a.9 .9 0 0 1 1.800 0 v1.200 a.9 .9 0 0 1 1.800 0 v5.700 q0 3.300 -3.300 3.300 h-.8 q-1.900 0 -3 -1.800 l-2 -3.200 q.9 -1.100 1.900 .3 Z" fill="#fff"/>
 <g stroke="#4d4d4d" stroke-width="2.600" stroke-linecap="round"><path d="M1345.500 37.500 h10 M1345.500 42.500 h10 M1345.500 47.500 h10"/></g>
</svg>
<!-- bookmarks -->
<svg class="abs" style="left:0;top:58px" width="520" height="26" viewBox="0 58 520 26">
 <g>
  <rect x="8" y="63" width="3" height="3" fill="#db4437"/><rect x="13" y="63" width="3" height="3" fill="#db4437"/><rect x="18" y="63" width="3" height="3" fill="#db4437"/>
  <rect x="8" y="68" width="3" height="3" fill="#3aa757"/><rect x="13" y="68" width="3" height="3" fill="#4285f4"/><rect x="18" y="68" width="3" height="3" fill="#f4b400"/>
  <rect x="8" y="73" width="3" height="3" fill="#3aa757"/><rect x="13" y="73" width="3" height="3" fill="#f4b400"/><rect x="18" y="73" width="3" height="3" fill="#f4b400"/>
 </g>
 <!-- minecraft block -->
 <path d="M107 65.500 L115 62 L123 65.500 L115 68.500 Z" fill="#4d8c38"/>
 <path d="M107 65.500 L115 68.500 V78 L107 74.500 Z" fill="#6b4730"/>
 <path d="M123 65.500 L115 68.500 V78 L123 74.500 Z" fill="#4e3322"/>
 <path d="M107 65.500 L115 68.500 L123 65.500 V67.300 L115 70.300 L107 67.300 Z" fill="#3b732b"/>
 <!-- facebook -->
 <rect x="242" y="63" width="14" height="14" fill="#3b5998"/>
 <path d="M251.600 77 v-5.300 h1.800 l.3 -2.100 h-2.100 v-1.300 c0 -.6 .2 -1 1.100 -1 h1.100 v-1.900 c-.2 0 -.9 -.1 -1.600 -.1 c-1.600 0 -2.700 1 -2.700 2.800 v1.500 h-1.800 v2.100 h1.800 v5.300 Z" fill="#fff"/>
 <!-- microsoft -->
 <rect x="325" y="63" width="6.500" height="6.500" fill="#f25022"/><rect x="332.500" y="63" width="6.500" height="6.500" fill="#7fba00"/>
 <rect x="325" y="70.500" width="6.500" height="6.500" fill="#00a4ef"/><rect x="332.500" y="70.500" width="6.500" height="6.500" fill="#ffb900"/>
 <!-- twitter -->
 <path d="M441 66.200 c-.55 .25 -1.150 .4 -1.750 .5 c.65 -.4 1.100 -1 1.350 -1.700 c-.6 .35 -1.250 .6 -1.950 .75 c-.55 -.6 -1.350 -.95 -2.250 -.95 c-1.700 0 -3.050 1.400 -3.050 3.100 c0 .25 0 .5 .1 .7 c-2.550 -.15 -4.800 -1.350 -6.300 -3.250 c-.25 .45 -.4 1 -.4 1.550 c0 1.050 .55 2 1.350 2.550 c-.5 0 -1 -.15 -1.400 -.4 c0 1.500 1.050 2.750 2.450 3.050 c-.45 .1 -.9 .15 -1.400 .05 c.4 1.200 1.550 2.100 2.900 2.150 c-1.300 1 -2.900 1.500 -4.550 1.300 c1.350 .85 2.950 1.350 4.700 1.350 c5.650 0 8.750 -4.700 8.750 -8.750 v-.4 c.6 -.45 1.100 -1 1.500 -1.600 Z" fill="#55acee"/>
 <!-- TV -->
 <rect x="496" y="62" width="16" height="16" fill="#000"/>
 <text x="504" y="75" text-anchor="middle" font-family="Liberation Sans,sans-serif" font-style="italic" font-size="12.500" fill="#d42222" letter-spacing="-1.200">TV</text>
</svg>
<div class="bm" style="left:28px;letter-spacing:-.254px">Aplicaciones</div>
<div class="bm" style="left:128px;letter-spacing:-.16px">Upcoming features</div>
<div class="bm" style="left:262.500px;letter-spacing:-.5px">Facebook</div>
<div class="bm" style="left:345.500px;letter-spacing:-.269px">Iniciar sesión</div>
<div class="bm" style="left:447px;letter-spacing:.11px">Twitter</div>
<div class="bm" style="left:517.500px;letter-spacing:-.3px">FreeTvAll.com - Car...</div>
<!-- window controls -->
<div class="abs" style="left:1171px;top:-1px;width:90px;height:16px;border:1px solid #33508a;border-radius:0 0 4px 4px;background:linear-gradient(#709de4,#5685d6);box-shadow:inset 0 0 0 1px rgba(255,255,255,.3);"></div>
<div class="abs" style="left:1171px;top:1px;width:92px;height:16px;line-height:16px;text-align:center;font-size:12.3px;letter-spacing:-.23px;color:#fff;text-shadow:1px 0 0 #1c2b4a,-1px 0 0 #1c2b4a,0 1px 0 #1c2b4a,0 -1px 0 #1c2b4a,1px 1px 0 #1c2b4a,-1px -1px 0 #1c2b4a,1px -1px 0 #1c2b4a,-1px 1px 0 #1c2b4a;">Sergio Alberto</div>
<div class="abs" style="left:1269px;top:-1px;width:91px;height:16px;border:1px solid #33508a;border-radius:0 0 4px 4px;background:linear-gradient(#709de4,#5685d6);box-shadow:inset 0 0 0 1px rgba(255,255,255,.3);"></div>
<svg class="abs" style="left:1269px;top:0" width="93" height="17" viewBox="1269 0 93 17">
 <path d="M1295.500 0 V16 M1319.500 0 V16" stroke="#33508a" stroke-width="1"/>
 <path d="M1294.500 0 V15 M1296.500 0 V15 M1318.500 0 V15 M1320.500 0 V15" stroke="#fff" stroke-opacity=".3" stroke-width="1"/>
 <rect x="1276.500" y="8.500" width="11.500" height="3.500" rx=".5" fill="#eaf0fb" stroke="#34486f" stroke-width="1"/>
 <rect x="1305" y="3.500" width="7.500" height="6.500" fill="none" stroke="#34486f" stroke-width="3.800"/>
 <rect x="1305" y="3.500" width="7.500" height="6.500" fill="none" stroke="#eaf0fb" stroke-width="1.900"/>
 <rect x="1301.500" y="7" width="7.500" height="6" fill="#5f8cda" stroke="#34486f" stroke-width="3.800"/>
 <rect x="1301.500" y="7" width="7.500" height="6" fill="#5f8cda" stroke="#eaf0fb" stroke-width="1.900"/>
 <path d="M1337 4.500 l7.500 7.500 M1344.500 4.500 l-7.500 7.500" stroke="#34486f" stroke-width="4.600" />
 <path d="M1337 4.500 l7.500 7.500 M1344.500 4.500 l-7.500 7.500" stroke="#eaf0fb" stroke-width="2.500" />
</svg>

<!-- TASKBAR -->
<div id="taskbar"></div>
<div id="taskline"></div>
<div id="taskhi"></div>
<div class="abs" style="left:183px;top:729px;width:58px;height:37px;border:1px solid #4d5b70;border-radius:3px;background:linear-gradient(135deg,#dbe5f1 0,#d3dfee 48%,#e0e9f4 50%,#d9e4f1 100%);box-shadow:inset 0 0 0 1px rgba(255,255,255,.75);"></div>
<svg class="abs" style="left:0;top:728px" width="260" height="40" viewBox="0 728 260 40">
 <defs>
  <radialGradient id="orb" cx=".5" cy=".95" r=".9"><stop offset="0" stop-color="#22e0fb"/><stop offset=".3" stop-color="#0f7fc4"/><stop offset=".62" stop-color="#0a4a86"/><stop offset="1" stop-color="#0b3a6e"/></radialGradient>
  <linearGradient id="orbt" x1="0" y1="0" x2="0" y2="1"><stop offset="0" stop-color="#b5cbdb"/><stop offset="1" stop-color="#4e81a6"/></linearGradient>
  <linearGradient id="fold" x1="0" y1="0" x2="0" y2="1"><stop offset="0" stop-color="#f3d77e"/><stop offset=".4" stop-color="#fbefba"/><stop offset="1" stop-color="#f4d983"/></linearGradient>
  <linearGradient id="stand" x1="0" y1="0" x2="0" y2="1"><stop offset="0" stop-color="#d6f0fb"/><stop offset="1" stop-color="#7cc4ec"/></linearGradient>
 </defs>
 <!-- start orb -->
 <circle cx="26.900" cy="748.100" r="18.700" fill="#b3c6da" opacity=".85"/>
 <circle cx="26.900" cy="748.100" r="17.900" fill="#123964"/>
 <circle cx="26.900" cy="748.100" r="17" fill="url(#orb)"/>
 <path d="M10 747.500 A16.900 16.900 0 0 1 43.800 747.500 Q35.500 744 26.900 747.300 Q18.300 750.600 10 747.500 Z" fill="url(#orbt)" opacity=".95"/>
 <!-- flag -->
 <path d="M19.300 738 Q23.800 735.300 28.300 737.800 L26.500 746.300 Q22.300 744.200 17.900 746.600 Z" fill="url(#fr)"/>
 <path d="M29.600 738.600 Q33.800 741 39.200 738.600 L37.500 747.300 Q32.500 749.900 28 747.200 Z" fill="url(#fg)"/>
 <path d="M17.500 748 Q22 745.700 26.100 747.800 L24.300 756.300 Q20.200 754.300 15.500 756.700 Z" fill="url(#fb)"/>
 <path d="M27.600 748.700 Q32 751.300 37.100 748.800 L35.400 757.400 Q30.300 760 25.800 757.400 Z" fill="url(#fy)"/>
 <defs>
  <linearGradient id="fr" x1="0" y1="0" x2="1" y2="1"><stop offset="0" stop-color="#e2401c"/><stop offset=".6" stop-color="#f17a1a"/><stop offset="1" stop-color="#f9c23a"/></linearGradient>
  <linearGradient id="fg" x1="0" y1="0" x2="1" y2="1"><stop offset="0" stop-color="#a9cf52"/><stop offset="1" stop-color="#5fa040"/></linearGradient>
  <linearGradient id="fb" x1="0" y1="0" x2="1" y2="1"><stop offset="0" stop-color="#1f7fd0"/><stop offset=".6" stop-color="#6db6ea"/><stop offset="1" stop-color="#2f8ddb"/></linearGradient>
  <linearGradient id="fy" x1="0" y1="0" x2="1" y2="1"><stop offset="0" stop-color="#fde16a"/><stop offset="1" stop-color="#f5a21c"/></linearGradient>
 </defs>
 <!-- creeper -->
 <path d="M93.600 752.400 l4.300 -1.300 l4.200 4.200 l-1.200 2.400 l-3.600 .800 l-3.700 -2 Z" fill="#46b330"/>
 <path d="M82 751 h3.500 v3.500 h-3.500 Z" fill="#43ad2e"/>
 <rect x="85" y="747" width="7" height="10.200" fill="#41aa2c"/>
 <path d="M85 747.300 h7 v2.200 h-7 Z" fill="#3a9a27"/>
 <path d="M77.800 754.800 l6.400 -1.600 l1.600 3.400 l-2 5.200 l-4.600 1 l-3.600 -1.200 Z" fill="#52c238"/>
 <path d="M91.800 755.600 l4.800 -.800 l1.400 2.400 l-.600 5.800 l-4.400 .600 l-1.200 -4 Z" fill="#52c238"/>
 <path d="M77.800 754.800 l6.400 -1.600 l.700 1.400 l-6.500 1.800 Z M91.800 755.600 l4.800 -.800 l.700 1.200 l-5.200 1 Z" fill="#68d24c"/>
 <path d="M75.800 761.400 l3.400 1.400 l4.600 -1 l-.300 1 l-4.300 1 l-3.600 -1.200 Z M92.900 763.100 l4.500 -.600 l-.100 .900 l-4.300 .600 Z" fill="#2f8a22"/>
 <rect x="81.900" y="732.200" width="14" height="15.300" fill="#52c339"/>
 <rect x="81.900" y="732.200" width="14" height="1.600" fill="#6ad54e"/>
 <rect x="94.700" y="733.800" width="1.200" height="13.700" fill="#49b632"/>
 <rect x="83.400" y="737.100" width="3.700" height="3.700" fill="#12300c"/><rect x="90.500" y="737.100" width="3.700" height="3.700" fill="#12300c"/>
 <rect x="84.400" y="738.100" width="1.700" height="1.700" fill="#2a5a1c"/><rect x="91.500" y="738.100" width="1.700" height="1.700" fill="#2a5a1c"/>
 <path d="M87.100 741.800 h3.400 v1.700 h1.700 v3.300 h-1.700 v-1.700 h-3.400 v1.700 h-1.700 v-3.300 h1.700 Z" fill="#12300c"/>
 <!-- explorer folder -->
 <path d="M136 738 q0 -1.500 1.500 -1.500 h9 q1.200 0 1.800 1 l1 1.500 h16 q1.500 0 1.500 1.500 v20.500 q0 1.500 -1.500 1.500 h-27.800 q-1.500 0 -1.500 -1.500 Z" fill="#ecc966"/>
 <rect x="139" y="735.500" width="9" height="4" rx=".8" fill="#fff"/><rect x="140" y="736.200" width="3" height="1.800" fill="#22b14c"/>
 <rect x="146.500" y="737.500" width="9" height="4" rx=".8" fill="#fff"/><rect x="147.500" y="738.200" width="3" height="1.800" fill="#e0491f"/>
 <rect x="154" y="739.500" width="9.500" height="4" rx=".8" fill="#fff"/><rect x="155" y="740.200" width="3" height="1.800" fill="#2d8fdf"/>
 <path d="M136 743 q0 -1.200 1.200 -1.200 h29.400 q1.200 0 1.200 1.200 v18 q0 1.500 -1.500 1.500 h-28.800 q-1.500 0 -1.500 -1.500 Z" fill="url(#fold)" stroke="#e3c060" stroke-width=".6"/>
 <path d="M139.500 753 q0 -2 2 -2 h19 q2 0 2 2 v10.500 h-5.800 v-6.500 q0 -1 -1 -1 h-9.400 q-1 0 -1 1 v6.500 h-5.800 Z" fill="url(#stand)" stroke="#5fb0e0" stroke-width=".7"/>
 <!-- chrome -->
 <circle cx="213" cy="748" r="14.400" fill="#f1f1f1"/>
 <path d="M200.53 740.80 A14.4 14.4 0 0 1 225.47 740.80 L212.65 741.41 A6.6 6.6 0 0 0 207.46 751.59 Z" fill="#de3b2e"/>
 <path d="M225.47 740.80 A14.4 14.4 0 0 1 213.00 762.40 L218.88 751.00 A6.6 6.6 0 0 0 212.65 741.41 Z" fill="#fcd116"/>
 <path d="M213.00 762.40 A14.4 14.4 0 0 1 200.53 740.80 L207.46 751.59 A6.6 6.6 0 0 0 218.88 751.00 Z" fill="#3faa3f"/>
 <circle cx="213" cy="748" r="6.700" fill="#f4f6f8"/>
 <circle cx="213" cy="748" r="5.300" fill="#3b78c9"/>
 <circle cx="213" cy="746.800" r="4" fill="#5c97de" opacity=".55"/>
</svg>
<div class="tray" style="left:1197.500px;top:737px;font-size:11.5px;transform:scaleX(.86);transform-origin:left center;">ES</div>
<svg class="abs" style="left:1220px;top:728px" width="146" height="40" viewBox="1220 728 146 40">
 <path d="M1227 752 L1231.400 746.500 L1235.800 752 Z" fill="#f4f7fb" stroke="#5d6f88" stroke-width=".6"/>
 <path d="M1248.200 743.400 L1254.300 742.500 V748.100 H1248.200 Z M1255.800 742.300 L1263.700 741 V748.100 H1255.800 Z M1248.200 749.600 H1254.300 V755.200 L1248.200 754.300 Z M1255.800 749.600 H1263.700 V756.700 L1255.800 755.400 Z" fill="#f9fbfd"/>
 <rect x="1351.500" y="729" width="14.500" height="39" fill="url(#sd)"/>
 <rect x="1351.500" y="729" width="1" height="39" fill="#b3c0d3"/>
 <defs><linearGradient id="sd" x1="0" y1="0" x2="1" y2="1"><stop offset="0" stop-color="#7a8ba5"/><stop offset=".45" stop-color="#52627a"/><stop offset="1" stop-color="#6f819b"/></linearGradient></defs>
</svg>
<div class="tray" style="left:1277px;top:732px;width:68px;text-align:center;">11:08 a.m.</div>
<div class="tray" style="left:1277px;top:749px;width:68px;text-align:center;">27/07/2015</div>
</div>
</body>
</html>
